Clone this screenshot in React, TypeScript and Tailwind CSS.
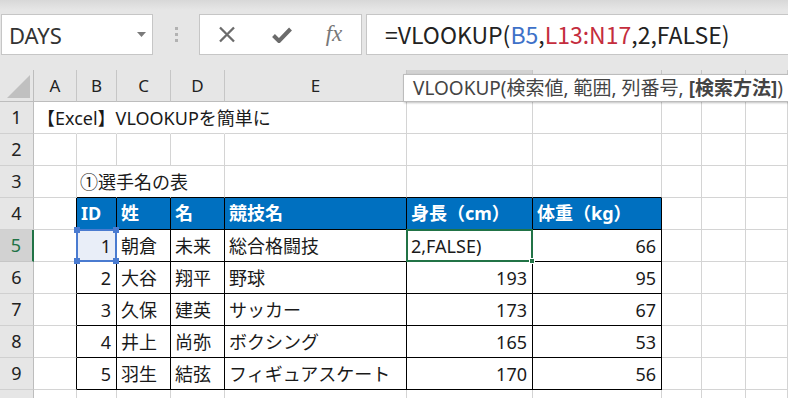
import React from "react";

const LETTERS = ["A", "B", "C", "D", "E", "F", "G", "H", "I", "J"];

const TABLE: Record<number, string[]> = {
  4: ["ID", "姓", "名", "競技名", "身長（cm）", "体重（kg）"],
  5: ["1", "朝倉", "未来", "総合格闘技", "2,FALSE)", "66"],
  6: ["2", "大谷", "翔平", "野球", "193", "95"],
  7: ["3", "久保", "建英", "サッカー", "173", "67"],
  8: ["4", "井上", "尚弥", "ボクシング", "165", "53"],
  9: ["5", "羽生", "結弦", "フィギュアスケート", "170", "56"],
};

function gridCell(r: number, c: number) {
  // c: 1..10 for A..J
  const inTable = r >= 4 && r <= 9 && c >= 2 && c <= 7;
  const blackRight = r >= 4 && r <= 9 && c >= 1 && c <= 7;
  const blackBottom = r >= 3 && r <= 9 && c >= 2 && c <= 7;
  const hideRight = (r === 1 && c >= 1 && c <= 4) || (r === 3 && c >= 2 && c <= 3);

  const rightCls = blackRight
    ? "border-r-black"
    : hideRight
    ? "border-r-transparent"
    : "border-r-[#d4d4d4]";
  const bottomCls = blackBottom ? "border-b-black" : "border-b-[#d4d4d4]";

  let content: React.ReactNode = null;
  let extra = "";
  let overlay: React.ReactNode = null;

  if (r === 1 && c === 1) {
    content = <span className="whitespace-nowrap pl-[3px] pt-[2px]">【Excel】VLOOKUPを簡単に</span>;
  }
  if (r === 3 && c === 2) {
    content = <span className="whitespace-nowrap pl-[3px] pt-[2px]">①選手名の表</span>;
  }

  if (inTable) {
    const v = TABLE[r][c - 2];
    if (r === 4) {
      extra = "bg-[#0070c0] text-white font-bold justify-start pl-[4px]";
      content = <span className="whitespace-nowrap">{v}</span>;
    } else {
      const numeric = c === 2 || ((c === 6 || c === 7) && !(r === 5 && c === 6));
      extra = numeric ? "justify-end pr-[5px]" : "justify-start pl-[4px]";
      content = <span className="whitespace-nowrap pt-[2px]">{v}</span>;
      if (r === 5 && c === 2) {
        extra += " bg-[#e9eef8] relative";
        overlay = (
          <div className="absolute -inset-px border-2 border-[#4a7bd0] z-10">
            <div className="absolute -left-[4px] -top-[4px] w-[6px] h-[6px] bg-[#4a7bd0]" />
            <div className="absolute -right-[4px] -top-[4px] w-[6px] h-[6px] bg-[#4a7bd0]" />
            <div className="absolute -left-[4px] -bottom-[4px] w-[6px] h-[6px] bg-[#4a7bd0]" />
            <div className="absolute -right-[4px] -bottom-[4px] w-[6px] h-[6px] bg-[#4a7bd0]" />
          </div>
        );
      }
      if (r === 5 && c === 6) {
        extra += " relative";
        overlay = (
          <div className="absolute -inset-px border-2 border-[#217346] z-10">
            <div className="absolute -right-[4px] -bottom-[4px] w-[6px] h-[6px] bg-[#217346] border border-white" />
          </div>
        );
      }
    }
  }

  return (
    <div
      key={`${r}-${c}`}
      className={`flex items-center border-r border-b ${rightCls} ${bottomCls} ${extra}`}
    >
      {content}
      {overlay}
    </div>
  );
}

export default function App() {
  const rows = [1, 2, 3, 4, 5, 6, 7, 8, 9, 10];
  return (
    <div className="relative w-[788px] h-[398px] overflow-hidden bg-white font-['Noto_Sans_CJK_JP',sans-serif]">
      {/* Formula toolbar */}
      <div className="h-[70px] bg-[linear-gradient(#d8d8d8,#e6e6e6_10px)] flex items-start pt-[14px] pl-px">
        <div className="w-[152px] h-[41px] bg-white border border-[#c6c6c6] flex items-center justify-between pl-[7px] pr-[6px]">
          <span className="text-[22px] text-[#333] font-['Noto_Sans',sans-serif] leading-none">DAYS</span>
          <svg width="9" height="5" viewBox="0 0 9 5">
            <polygon points="0,0 9,0 4.5,5" fill="#7a7a7a" />
          </svg>
        </div>
        <div className="w-[46px] h-[41px] flex flex-col items-center justify-center gap-[3px]">
          <div className="w-[3px] h-[3px] bg-[#b2b2b2]" />
          <div className="w-[3px] h-[3px] bg-[#b2b2b2]" />
          <div className="w-[3px] h-[3px] bg-[#b2b2b2]" />
        </div>
        <div className="w-[163px] h-[41px] bg-white border border-[#c6c6c6] flex items-center">
          <div className="ml-[12px] w-[30px] flex justify-center">
            <svg width="18" height="17" viewBox="0 0 18 17">
              <path d="M2 1.5 L16 15.5 M16 1.5 L2 15.5" stroke="#6b6b6b" strokeWidth="2.3" fill="none" />
            </svg>
          </div>
          <div className="ml-[25px] w-[30px] flex justify-center">
            <svg width="20" height="16" viewBox="0 0 20 16">
              <path d="M1.5 8.5 L7 14 L18.5 2" stroke="#6b6b6b" strokeWidth="4" fill="none" />
            </svg>
          </div>
          <div className="ml-[22px] w-[30px] flex justify-center">
            <span className="italic text-[23px] leading-none text-[#777] font-['Liberation_Serif',serif] pb-[2px]">fx</span>
          </div>
        </div>
        <div className="ml-[4px] flex-1 h-[41px] bg-white border border-r-0 border-[#c6c6c6] flex items-center pl-[18px]">
          <span className="text-[23px] leading-none text-[#222] whitespace-nowrap font-['Noto_Sans_CJK_JP',sans-serif]">
            =VLOOKUP(<span className="text-[#3e71c8]">B5</span>,<span className="text-[#c42d3d]">L13:N17</span>,2,FALSE)
          </span>
        </div>
      </div>

      {/* Sheet grid */}
      <div className="grid grid-cols-[34px_43px_40px_54px_54px_182px_126px_129px_40px_44px_1fr] auto-rows-[32px] text-[18px] text-[#1a1a1a] font-['Noto_Sans','Noto_Sans_CJK_JP',sans-serif]">
        {/* Column header row */}
        <div className="relative bg-[#e6e6e6] border-r border-b border-r-[#bdbdbd] border-b-[#bdbdbd]">
          <svg className="absolute right-[3px] bottom-[3px]" width="23" height="23" viewBox="0 0 23 23">
            <polygon points="0,23 23,0 23,23" fill="#c0c0c0" />
          </svg>
        </div>
        {LETTERS.map((l, i) =>
          i === 5 ? (
            <div
              key={l}
              className="bg-[#d2d2d2] border-r border-r-[#c6c6c6] border-b-2 border-b-[#217346] flex items-center justify-center text-[17px] text-[#217346] font-['Noto_Sans',sans-serif]"
            >
              {l}
            </div>
          ) : (
            <div
              key={l}
              className="bg-[#e6e6e6] border-r border-b border-r-[#c6c6c6] border-b-[#bdbdbd] flex items-center justify-center text-[17px] text-[#222] font-['Noto_Sans',sans-serif]"
            >
              {l}
            </div>
          )
        )}

        {rows.map((r) => (
          <React.Fragment key={r}>
            {r === 5 ? (
              <div className="bg-[#d2d2d2] border-r-2 border-r-[#217346] border-b border-b-[#c6c6c6] flex items-center justify-center text-[18px] text-[#217346] font-['Noto_Sans',sans-serif]">
                {r}
              </div>
            ) : (
              <div className="bg-[#e6e6e6] border-r border-b border-r-[#bdbdbd] border-b-[#d0d0d0] flex items-center justify-center text-[18px] text-[#222] font-['Noto_Sans',sans-serif]">
                {r}
              </div>
            )}
            {LETTERS.map((_, i) => gridCell(r, i + 1))}
          </React.Fragment>
        ))}
      </div>

      {/* Function argument tooltip */}
      <div className="absolute left-[403px] top-[74px] h-[28px] bg-white border border-[#bcbcbc] shadow-[1px_1px_2px_rgba(0,0,0,0.25)] flex items-center pl-[9px] pr-[12px] whitespace-nowrap text-[19px] text-[#444] font-['Noto_Sans','Noto_Sans_CJK_JP',sans-serif] z-20">
        VLOOKUP(検索値, 範囲, 列番号, <span className="font-bold ml-[5px]">[検索方法]</span>)
      </div>
    </div>
  );
}
